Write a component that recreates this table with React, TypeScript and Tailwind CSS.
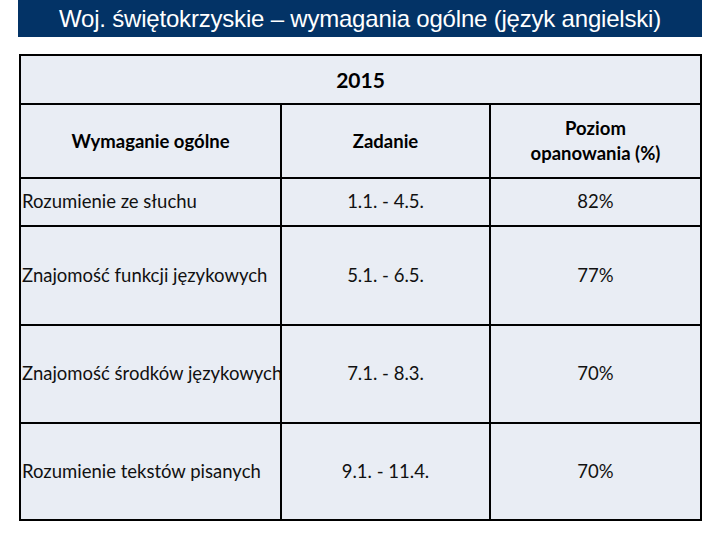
import React from "react";

const rows = [
  { name: "Rozumienie ze słuchu", task: "1.1. - 4.5.", pct: "82%", h: "h-[48px]" },
  { name: "Znajomość funkcji językowych", task: "5.1. - 6.5.", pct: "77%", h: "h-[99px]" },
  { name: "Znajomość środków językowych", task: "7.1. - 8.3.", pct: "70%", h: "h-[98px]" },
  { name: "Rozumienie tekstów pisanych", task: "9.1. - 11.4.", pct: "70%", h: "h-[97px]" },
];

export default function App() {
  return (
    <div className="w-[720px] h-[540px] bg-white overflow-hidden">
      <div className="mx-[18px] h-[37px] bg-[#033366] flex items-center justify-center">
        <span
          className="text-white text-[24px] leading-none tracking-[-0.2px]"
          style={{ fontFamily: '"Liberation Sans", Arial, sans-serif' }}
        >
          Woj. świętokrzyskie – wymagania ogólne (język angielski)
        </span>
      </div>
      <div className="mt-[17px] ml-[19px]">
        <table
          className="table-fixed border-collapse bg-[#e9edf4] text-black w-[683px]"
          style={{ fontFamily: 'Lato, "Open Sans", sans-serif' }}
        >
          <colgroup>
            <col className="w-[261px]" />
            <col className="w-[209px]" />
            <col className="w-[211px]" />
          </colgroup>
          <tbody>
            <tr className="h-[49px]">
              <td colSpan={3} className="border-2 border-black text-center font-bold text-[21px]">
                2015
              </td>
            </tr>
            <tr className="h-[74px]">
              <td className="border-2 border-black text-center font-bold text-[18.5px] leading-[25px]">
                Wymaganie ogólne
              </td>
              <td className="border-2 border-black text-center font-bold text-[18.5px] leading-[25px]">
                Zadanie
              </td>
              <td className="border-2 border-black text-center font-bold text-[18.5px] leading-[25px]">
                Poziom
                <br />
                opanowania (%)
              </td>
            </tr>
            {rows.map((r) => (
              <tr key={r.name} className={r.h}>
                <td className="border-2 border-black text-left pl-[1px] pr-0 text-[18.5px] whitespace-nowrap overflow-hidden text-[#111]">
                  {r.name}
                </td>
                <td className="border-2 border-black text-center text-[18.5px] text-[#111]">{r.task}</td>
                <td className="border-2 border-black text-center text-[18.5px] text-[#111]">{r.pct}</td>
              </tr>
            ))}
          </tbody>
        </table>
      </div>
    </div>
  );
}
